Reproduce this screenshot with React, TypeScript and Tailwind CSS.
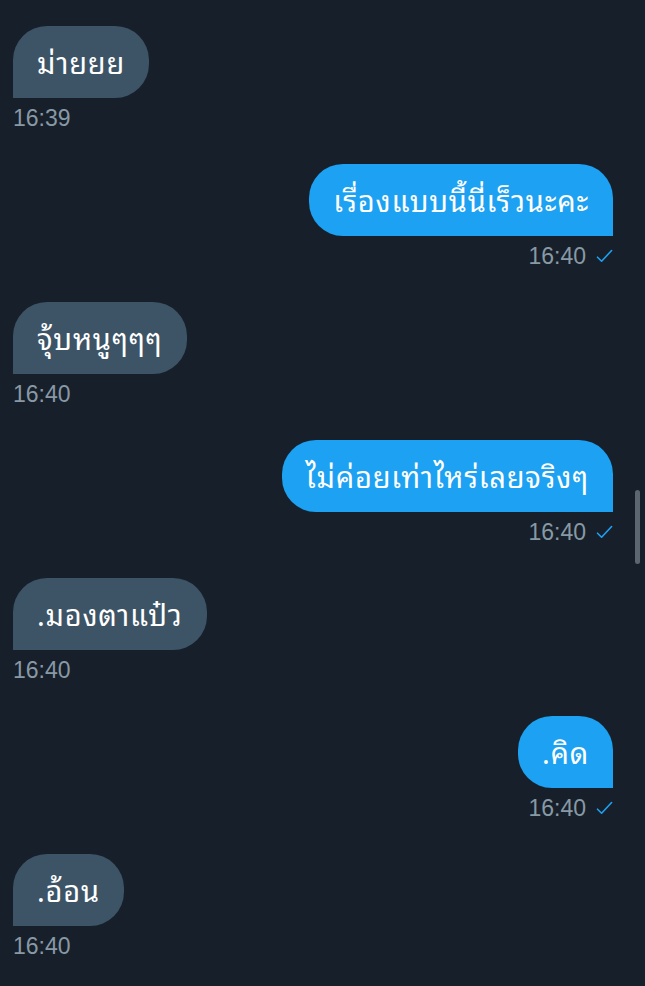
const messages = [
  { text: 'ม่ายยย', time: '16:39', mine: false },
  { text: 'เรื่องแบบนี้นี่เร็วนะคะ', time: '16:40', mine: true },
  { text: 'จุ้บหนูๆๆๆ', time: '16:40', mine: false },
  { text: 'ไม่ค่อยเท่าไหร่เลยจริงๆ', time: '16:40', mine: true },
  { text: '.มองตาแป๋ว', time: '16:40', mine: false },
  { text: '.คิด', time: '16:40', mine: true },
  { text: '.อ้อน', time: '16:40', mine: false },
];

const Check = () => (
  <svg width="17" height="14" viewBox="0 0 17 14" fill="none">
    <path d="M1.5 8.2 L5.6 12.2 L15.6 1.5" stroke="#1DA1F2" strokeWidth="1.6" strokeLinecap="round" strokeLinejoin="round" />
  </svg>
);

const Message = ({ text, time, mine }: { text: string; time: string; mine: boolean }) => (
  <div className={`flex flex-col mb-[35px] ${mine ? 'items-end' : 'items-start'}`}>
    <div
      className={
        mine
          ? 'h-[72px] flex items-center px-6 rounded-[34px] rounded-br-none bg-[#1DA1F2] text-white text-[29px] tracking-[0.8px]'
          : 'h-[72px] flex items-center px-6 rounded-[34px] rounded-bl-none bg-[#3D5466] text-white text-[29px] tracking-[0.8px]'
      }
    >
      {text}
    </div>
    <div
      className="mt-[9px] h-[22px] flex items-center gap-[10px] text-[23px] leading-[22px] text-[#8899A6]"
      style={{ fontFamily: '"Liberation Sans", Arial, sans-serif' }}
    >
      <span>{time}</span>
      {mine && <Check />}
    </div>
  </div>
);

export default function App() {
  return (
    <div
      className="relative w-[645px] h-[986px] overflow-hidden bg-[#17202A] pt-[26px] pl-[13px] pr-[32px]"
      style={{ fontFamily: '"Noto Sans Thai Looped", Loma, Garuda, "Noto Sans Thai", "Liberation Sans", "DejaVu Sans", sans-serif' }}
    >
      {messages.map((m, i) => (
        <Message key={i} {...m} />
      ))}
      <div className="absolute left-[635px] top-[490px] w-[5px] h-[74px] rounded-full bg-[#5B6670]" />
    </div>
  );
}
